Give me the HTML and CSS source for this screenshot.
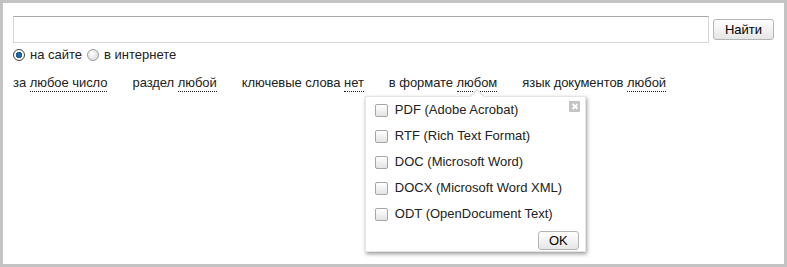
FILE: index.html
```html
<!DOCTYPE html>
<html lang="ru">
<head>
    <meta charset="UTF-8" />
    <title>Поиск</title>
    <link rel="stylesheet" href="styles.css">
</head>
<body>
    <div class="frame">
        <form class="search">
            <input type="text" class="query" />
            <button type="button" class="btn find">Найти</button>
        </form>

        <div class="where">
            <label><span class="radio on"></span>на сайте</label>
            <label><span class="radio"></span>в интернете</label>
        </div>

        <div class="filters">
            <span class="filter">за <a class="dotted">любое число</a></span>
            <span class="filter">раздел <a class="dotted">любой</a></span>
            <span class="filter">ключевые слова <a class="dotted">нет</a></span>
            <span class="filter format">в формате <a class="dotted">любом</a>
                <div class="popup">
                    <span class="close"></span>
                    <label class="opt"><span class="box"></span>PDF (Adobe Acrobat)</label>
                    <label class="opt"><span class="box"></span>RTF (Rich Text Format)</label>
                    <label class="opt"><span class="box"></span>DOC (Microsoft Word)</label>
                    <label class="opt"><span class="box"></span>DOCX (Microsoft Word XML)</label>
                    <label class="opt"><span class="box"></span>ODT (OpenDocument Text)</label>
                    <div class="actions"><button type="button" class="btn ok">OK</button></div>
                </div>
            </span>
            <span class="filter">язык документов <a class="dotted">любой</a></span>
        </div>
    </div>
</body>
</html>
```

FILE: styles.css
```css
* { box-sizing: border-box; }
body { margin: 0; font-family: Arial, "Liberation Sans", sans-serif; font-size: 13px; color: #222; background: #fff; }
.frame { height: 267px; border: 3px solid #c3c3c3; padding: 13px 10px 0 10px; }

.search { display: flex; align-items: center; gap: 4px; }
.query { flex: 1; height: 27px; margin: 0; border: 1px solid #d6d6d6; border-top-color: #a9a9a9; background: #fff; }
.btn { font-family: inherit; font-size: 13px; color: #000; border: 1px solid #b4b4b4; border-radius: 3px; background: linear-gradient(#ffffff, #e6e6e6); padding: 0; cursor: pointer; }
.find { width: 61px; height: 21px; }

.where { display: flex; gap: 5px; margin-top: 4px; height: 15px; align-items: center; }
.where label { display: flex; align-items: center; gap: 5px; }
.radio { width: 12px; height: 12px; border-radius: 50%; border: 1px solid #9a9a9a; background: radial-gradient(circle at 40% 35%, #fff, #d4d4d4); }
.radio.on { background: radial-gradient(circle, #1e6fb0 0, #1a5d96 3px, #fff 3.5px, #e8e8e8); border-color: #444; }

.filters { display: flex; gap: 25px; margin-top: 13px; line-height: 16px; letter-spacing: -0.05px; }
.filter { position: relative; white-space: nowrap; }
.dotted { border-bottom: 1px dotted #222; padding-bottom: 1px; cursor: pointer; }

.popup { position: absolute; left: -24px; top: 21px; width: 221px; height: 156px; background: #fff; border: 1px solid #e4e4e4; box-shadow: 1px 2px 4px rgba(0,0,0,0.4); padding: 0 0 0 9px; letter-spacing: 0; }
.popup::before { content: ""; position: absolute; top: -6px; left: 106px; width: 9px; height: 9px; background: #fff; border-left: 1px solid #ddd; border-top: 1px solid #ddd; transform: rotate(45deg); }
.close { position: absolute; top: 4px; right: 5px; width: 11px; height: 11px; background: #c4c4c4; border-radius: 1px; }
.close::before, .close::after { content: ""; position: absolute; left: 5px; top: 2px; width: 1.5px; height: 7px; background: #fff; transform: rotate(45deg); }
.close::after { transform: rotate(-45deg); }
.opt { display: flex; align-items: center; gap: 7px; height: 26px; }
.box { width: 13px; height: 13px; border: 1px solid #a6a6a6; border-radius: 2px; background: linear-gradient(#fff, #e4e4e4); }
.actions { display: flex; justify-content: flex-end; padding-right: 6px; margin-top: 4px; }
.ok { width: 41px; height: 19px; }
```
